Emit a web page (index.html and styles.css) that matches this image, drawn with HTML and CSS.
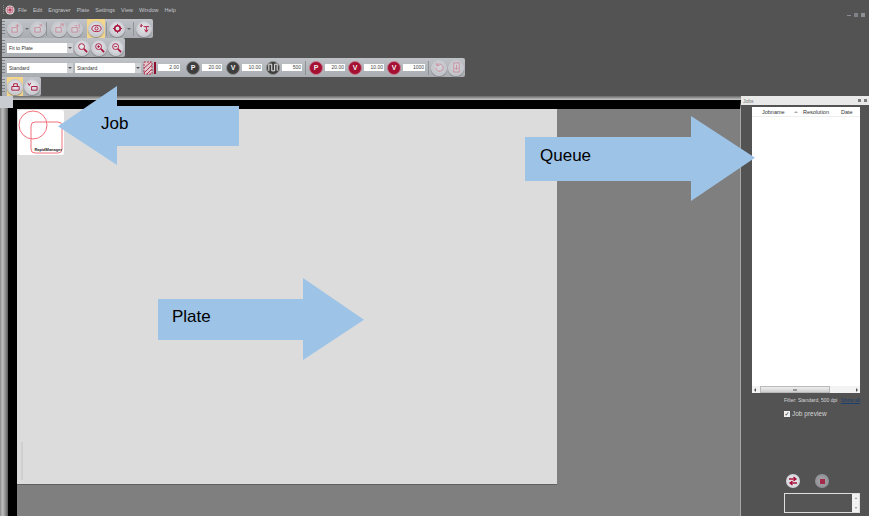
FILE: index.html
```html
<!DOCTYPE html>
<html lang="en">
  <head>
    <meta charset="UTF-8" />
    <title>Plate manager</title>
    <link rel="stylesheet" href="styles.css">
  </head>
  <body>
    <div class="app">
      <div class="menubar">
        <div class="menu-grip"></div>
        <svg class="app-logo" width="10" height="10" viewBox="0 0 10 10">
          <circle cx="5" cy="5" r="4.5" fill="#e8e3e5"></circle>
          <circle cx="5" cy="5" r="3.4" fill="#b4405c"></circle>
          <path d="M3 3h4v4H3z" fill="none" stroke="#eee" stroke-width="0.8"></path>
        </svg>
        <span class="menu-item">File</span>
        <span class="menu-item">Edit</span>
        <span class="menu-item">Engraver</span>
        <span class="menu-item">Plate</span>
        <span class="menu-item">Settings</span>
        <span class="menu-item">View</span>
        <span class="menu-item">Window</span>
        <span class="menu-item">Help</span>
        <div class="win-controls">
          <i class="win-min"></i>
          <i class="win-max"></i>
          <i class="win-close"></i>
        </div>
      </div>

      <div class="toolbar tb-main">
        <div class="grip"></div>
        <button class="tool dim">
          <svg viewBox="0 0 12 12"><path d="M2 5h6v5H2z M8 1v4 M6 3h4" class="ic-dim"></path></svg>
        </button>
        <i class="drop"></i>
        <button class="tool dim">
          <svg viewBox="0 0 12 12"><path d="M2 5h6v5H2z M7 1l3 3 M10 1L7 4" class="ic-dim"></path></svg>
        </button>
        <i class="sep sep-a"></i>
        <button class="tool dim">
          <svg viewBox="0 0 12 12"><path d="M2 5h6v5H2z M6 4l4-3 M7 1h3v3" class="ic-dim"></path></svg>
        </button>
        <button class="tool dim">
          <svg viewBox="0 0 12 12"><path d="M2 5h6v5H2z M5 3h3 M10 1v5 M10 8v1" class="ic-dim"></path></svg>
        </button>
        <div class="tool-on">
          <button class="tool">
            <svg viewBox="0 0 12 12"><ellipse cx="6" cy="6" rx="5" ry="3.4" class="ic"></ellipse><circle cx="6" cy="6" r="1.7" class="ic"></circle></svg>
          </button>
        </div>
        <i class="sep sep-b"></i>
        <button class="tool">
          <svg viewBox="0 0 12 12"><circle cx="6" cy="6" r="3" class="ic ic-thick"></circle><path d="M6 1v2 M6 9v2 M1 6h2 M9 6h2" class="ic"></path></svg>
        </button>
        <i class="drop"></i>
        <i class="sep"></i>
        <button class="tool">
          <svg viewBox="0 0 12 12"><path d="M1 3l1.500 1L4 2.500 M2.500 1v3 M5 4h6 M8 4v5 M6 7l2 3 2-3" class="ic"></path></svg>
        </button>
      </div>

      <div class="toolbar tb-zoom">
        <div class="grip"></div>
        <div class="combo combo-wide">
          <span>Fit to Plate</span><i class="combo-arrow"></i>
        </div>
        <button class="tool">
          <svg viewBox="0 0 12 12"><circle cx="5" cy="5" r="3.2" class="ic"></circle><path d="M7.500 7.500L11 11" class="ic ic-thick"></path></svg>
        </button>
        <button class="tool">
          <svg viewBox="0 0 12 12"><circle cx="5" cy="5" r="3.2" class="ic"></circle><path d="M7.500 7.500L11 11" class="ic ic-thick"></path><path d="M3.500 5h3 M5 3.500v3" class="ic"></path></svg>
        </button>
        <button class="tool">
          <svg viewBox="0 0 12 12"><circle cx="5" cy="5" r="3.2" class="ic"></circle><path d="M7.500 7.500L11 11" class="ic ic-thick"></path><path d="M3.500 5h3" class="ic"></path></svg>
        </button>
      </div>

      <div class="toolbar tb-params">
        <div class="grip"></div>
        <div class="combo combo-wide"><span>Standard</span><i class="combo-arrow"></i></div>
        <div class="combo combo-wide combo-next"><span>Standard</span><i class="combo-arrow"></i></div>
        <svg class="hatch" width="15" height="16" viewBox="0 0 15 16">
          <path d="M1 2h8v12H1z" fill="#e2c9d0" stroke="#b03a55" stroke-width="1" stroke-dasharray="2 1"></path>
          <path d="M1 8L8 2 M1 13L9 5 M4 14l5-5" stroke="#b03a55" stroke-width="1"></path>
          <path d="M12 2v12" stroke="#8f1230" stroke-width="2"></path>
        </svg>
        <span class="num num-wide">2.00</span>
        <span class="badge badge-dark badge-first">P</span>
        <span class="num">20.00</span>
        <span class="badge badge-dark">V</span>
        <span class="num">10.00</span>
        <span class="badge badge-dark">
          <svg width="10" height="9" viewBox="0 0 12 10"><path d="M1 9V1h3.500v8H8V1h3v8" fill="none" stroke="#eee" stroke-width="1.200"></path></svg>
        </span>
        <span class="num">500</span>
        <i class="sep sep-c"></i>
        <span class="badge badge-red">P</span>
        <span class="num">20.00</span>
        <span class="badge badge-red">V</span>
        <span class="num">10.00</span>
        <span class="badge badge-red">V</span>
        <span class="num num-wide">1000</span>
        <i class="sep sep-d"></i>
        <button class="tool dim">
          <svg viewBox="0 0 12 12"><path d="M3 3.500A4 4 0 1 1 2 6.500 M3 1v3h3" class="ic-dim"></path></svg>
        </button>
        <button class="tool dim tool-last">
          <svg viewBox="0 0 12 12"><path d="M3 1h6v10H3z M6 3v5 M4 6l2 2 2-2" class="ic-dim"></path></svg>
        </button>
      </div>

      <div class="toolbar tb-mode">
        <div class="grip"></div>
        <div class="tool-on">
          <button class="tool">
            <svg viewBox="0 0 12 12"><path d="M2 6h8v4H2z M4 6V3h4v3" class="ic"></path></svg>
          </button>
        </div>
        <button class="tool">
          <svg viewBox="0 0 12 12"><path d="M1 2l1.500 3L4 2 M5 6h6v4H5z" class="ic"></path></svg>
        </button>
      </div>

      <div class="workspace">
        <div class="view">
          <div class="view-corner"></div>
          <div class="view-top"></div>
          <div class="view-body">
            <div class="view-edge"></div>
            <div class="view-black"></div>
            <div class="canvas">
              <div class="plate">
                <div class="job">
                  <svg width="45" height="44" viewBox="0 0 45 44">
                    <circle cx="15" cy="15" r="14" fill="none" stroke="#f0727c" stroke-width="1"></circle>
                    <rect x="13" y="12" width="31" height="31" rx="4" fill="none" stroke="#f0727c" stroke-width="1"></rect>
                  </svg>
                  <span class="job-name">RapidManager</span>
                </div>
                <div class="plate-mark"></div>
              </div>
            </div>
          </div>
        </div>

        <aside class="jobs">
          <div class="jobs-head">
            <span>Jobs</span>
            <span class="jobs-btns"><i></i><i></i></span>
          </div>
          <div class="jobs-table">
            <div class="jobs-cols">
              <span class="col-name">Jobname</span>
              <span class="col-sort"></span>
              <span class="col-res">Resolution</span>
              <span class="col-date">Date</span>
            </div>
            <div class="jobs-rows"></div>
            <div class="hscroll">
              <i class="arrow-l"></i>
              <div class="hscroll-thumb"><b></b></div>
              <i class="arrow-r"></i>
            </div>
          </div>
          <div class="jobs-filter">
            <span>Filter: Standard, 500 dpi</span>
            <a>Show all</a>
          </div>
          <label class="jobs-preview">
            <i class="check">✓</i>
            <span>Job preview</span>
          </label>
          <div class="jobs-actions">
            <span class="round-btn">
              <svg width="10" height="10" viewBox="0 0 10 10">
                <path d="M1 3h6 M5.500 1L8 3 5.500 5 M9 7H3 M4.500 5L2 7l2.500 2" fill="none" stroke="#a8103a" stroke-width="1.300"></path>
              </svg>
            </span>
            <span class="round-btn round-stop"><i></i></span>
          </div>
          <div class="jobs-log">
            <div class="log-scroll"><i class="up"></i><i class="down"></i></div>
          </div>
        </aside>
      </div>

      <div class="callout callout-job"><span>Job</span></div>
      <div class="callout callout-queue"><span>Queue</span></div>
      <div class="callout callout-plate"><span>Plate</span></div>
    </div>
  </body>
</html>
```

FILE: styles.css
```css
* {
  box-sizing: border-box;
  margin: 0;
  padding: 0;
}

html,
body {
  width: 869px;
  height: 516px;
  overflow: hidden;
}

body {
  background: #535353;
  font-family: "Liberation Sans", Arial, sans-serif;
}

.app {
  position: relative;
  display: flex;
  flex-direction: column;
  width: 869px;
  height: 516px;
  background: #535353;
}

/* menu */
.menubar {
  display: flex;
  align-items: center;
  height: 19px;
  padding: 1px 0 0 3px;
  font-size: 5.500px;
  color: #c4c7cb;
}

.menu-grip {
  flex: none;
  width: 1px;
  height: 10px;
  margin-right: 1px;
  background: repeating-linear-gradient(#8a8a8a 0 1px, transparent 1px 2px);
}

.app-logo {
  flex: none;
  margin-right: 3px;
}

.menu-item {
  margin-right: 6px;
}

.win-controls {
  display: flex;
  align-items: center;
  gap: 3px;
  margin-left: auto;
  margin-right: 4px;
  padding-top: 10px;
}

.win-controls i {
  display: block;
}

.win-min {
  width: 4px;
  height: 1px;
  background: #8a8d92;
}

.win-max {
  width: 4px;
  height: 4px;
  background: #7f8388;
}

.win-close {
  width: 4px;
  height: 4px;
  background: #8c9096;
}

/* toolbars */
.toolbar {
  display: flex;
  align-items: center;
  margin-left: 2px;
  height: 19px;
  border-radius: 0 2px 2px 0;
  background: linear-gradient(#bfc2c7, #a9acb1);
}

.tb-main {
  width: 151px;
}

.tb-zoom {
  width: 123px;
}

.tb-params {
  width: 463px;
  margin-top: 1px;
}

.tb-mode {
  width: 39px;
}

.grip {
  flex: none;
  width: 3px;
  height: 15px;
  margin-right: 2px;
  background: repeating-linear-gradient(#7d8084 0 1px, transparent 1px 3px);
}

.tool {
  display: flex;
  flex: none;
  align-items: center;
  justify-content: center;
  width: 16px;
  height: 16px;
  border: 1px solid #c8cacf;
  border-radius: 50%;
  background: radial-gradient(circle at 50% 40%, #e9eaee, #bdc0c6);
  box-shadow: 0 1px 1px #83868b;
}

.tool svg {
  display: block;
  width: 11px;
  height: 11px;
}

.ic {
  fill: none;
  stroke: #a8103a;
  stroke-width: 1;
}

.ic-thick {
  stroke-width: 1.800;
}

.ic-dim {
  fill: none;
  stroke: #c98d9c;
  stroke-width: 1;
}

.tool.dim {
  background: radial-gradient(circle at 50% 40%, #d6d7db, #b9bbc1);
}

.tool-on {
  display: flex;
  flex: none;
  align-items: center;
  justify-content: center;
  width: 18px;
  height: 19px;
  margin: 0 0 0 4px;
  background: #f3d68c;
}

.tb-mode .tool-on {
  width: 16px;
  margin: 0 1px 0 0;
}

.drop {
  flex: none;
  width: 0;
  height: 0;
  margin: 0 1px 0 2px;
  border-left: 2px solid transparent;
  border-right: 2px solid transparent;
  border-top: 2px solid #686b70;
}

.sep {
  flex: none;
  width: 1px;
  height: 14px;
  margin: 0 2px 0 1px;
  background: #8f9297;
}

.sep-a {
  margin: 0 4px 0 0;
}

.sep-b {
  margin: 0 2px 0 1px;
}

.sep-c {
  margin: 0 0 0 3px;
}

.sep-d {
  margin: 0 2px 0 3px;
}

.tool-last {
  margin-left: 1px;
}

.tb-zoom .tool {
  margin-left: 1px;
}

/* combos and number fields */
.combo {
  display: flex;
  flex: none;
  align-items: center;
  height: 10px;
  background: #fff;
  font-size: 5px;
  color: #333;
}

.combo span {
  flex: 1;
  padding-left: 2px;
}

.combo-arrow {
  display: flex;
  align-items: center;
  justify-content: center;
  width: 6px;
  height: 100%;
  background: #cfd1d5;
}

.combo-arrow::after {
  content: "";
  border-left: 2px solid transparent;
  border-right: 2px solid transparent;
  border-top: 2px solid #555;
}

.combo-wide {
  width: 66px;
}

.combo-next {
  margin: 0 2px;
}

.hatch {
  flex: none;
}

.num {
  flex: none;
  width: 20px;
  height: 7px;
  padding-right: 1px;
  background: #fff;
  font-size: 5px;
  line-height: 7px;
  text-align: right;
  color: #444;
}

.num-wide {
  width: 22px;
}

.badge {
  display: flex;
  flex: none;
  align-items: center;
  justify-content: center;
  width: 14px;
  height: 14px;
  margin: 0 2px 0 4px;
  border-radius: 50%;
  font-size: 7px;
  font-weight: bold;
  color: #f2f2f2;
}

.badge-first {
  margin-left: 6px;
}

.badge-dark {
  border: 1px solid #8a8a8a;
  background: #3d3d3d;
}

.badge-red {
  margin-left: 3px;
  border: 1px solid #c3768a;
  background: #a40f32;
}

/* main area */
.workspace {
  display: flex;
  flex: 1;
  min-height: 0;
}

.view {
  position: relative;
  display: flex;
  flex-direction: column;
  width: 741px;
}

.view-corner {
  position: absolute;
  left: 0;
  top: 0;
  width: 13px;
  height: 12px;
  background: #c9ccd0;
}

.view-top {
  flex: none;
  height: 4px;
  background: linear-gradient(#6a6a6a, #c9c9c9);
}

.view-body {
  display: flex;
  flex: 1;
  min-height: 0;
}

.view-edge {
  flex: none;
  width: 8px;
  background: linear-gradient(90deg, #8a8a8a, #bdbdbd 30%, #9a9a9a 60%, #5a5a5a);
}

.view-black {
  flex: none;
  width: 9px;
  background: #000;
}

.canvas {
  flex: 1;
  border-top: 9px solid #000;
  border-right: 1px solid #a8a8a8;
  background: #7f7f7f;
}

.plate {
  position: relative;
  width: 540px;
  height: 376px;
  padding: 1px;
  border-bottom: 1px solid #5f5f5f;
  background: #dcdcdc;
}

.job {
  position: relative;
  width: 46px;
  height: 45px;
  border-radius: 2px;
  background: #fff;
}

.job svg {
  display: block;
}

.job-name {
  position: absolute;
  right: 2px;
  bottom: 3px;
  font-size: 4px;
  font-weight: bold;
  color: #222;
}

.plate-mark {
  position: absolute;
  left: 4px;
  top: 333px;
  width: 2px;
  height: 38px;
  background: #cfcfcf;
}

/* jobs panel */
.jobs {
  display: flex;
  flex-direction: column;
  width: 128px;
  background: #535353;
}

.jobs-head {
  display: flex;
  flex: none;
  align-items: center;
  justify-content: space-between;
  height: 9px;
  padding: 0 2px;
  background: #e9e9e9;
  font-size: 5px;
  color: #777;
}

.jobs-btns {
  display: flex;
  gap: 3px;
}

.jobs-btns i {
  display: block;
  width: 3px;
  height: 3px;
  background: #7b7b7b;
}

.jobs-table {
  display: flex;
  flex: none;
  flex-direction: column;
  width: 108px;
  height: 286px;
  margin: 2px 0 0 11px;
  background: #fff;
}

.jobs-cols {
  display: flex;
  flex: none;
  align-items: center;
  height: 10px;
  border-bottom: 1px solid #eee;
  font-size: 5.500px;
  color: #333;
}

.col-name {
  flex: none;
  width: 33px;
  padding-left: 10px;
}

.col-sort {
  width: 0;
  height: 0;
  margin: 0 5px 0 9px;
  border-left: 2px solid transparent;
  border-right: 2px solid transparent;
  border-bottom: 2px solid #aaa;
}

.col-res {
  flex: none;
  width: 38px;
}

.col-date {
  flex: none;
}

.jobs-rows {
  flex: 1;
}

.hscroll {
  display: flex;
  flex: none;
  align-items: center;
  height: 7px;
  background: #f3f3f3;
}

.hscroll i {
  flex: none;
  width: 0;
  height: 0;
  border-top: 2px solid transparent;
  border-bottom: 2px solid transparent;
}

.hscroll .arrow-l {
  margin: 0 4px 0 2px;
  border-right: 2px solid #555;
}

.hscroll .arrow-r {
  margin-left: 26px;
  border-left: 2px solid #555;
}

.hscroll-thumb {
  display: flex;
  align-items: center;
  justify-content: center;
  width: 70px;
  height: 7px;
  border: 1px solid #b9b9b9;
  background: linear-gradient(#eee, #cfcfcf);
}

.hscroll-thumb b {
  width: 4px;
  height: 2px;
  background: #999;
}

.jobs-filter {
  display: flex;
  justify-content: space-between;
  width: 76px;
  margin: 4px 0 0 43px;
  font-size: 5px;
  white-space: nowrap;
  color: #d8d8d8;
}

.jobs-filter a {
  color: #1c3f6e;
  text-decoration: underline;
}

.jobs-preview {
  display: flex;
  align-items: center;
  gap: 2px;
  margin: 7px 0 0 43px;
  font-size: 6.500px;
  color: #d4d4d4;
}

.check {
  display: flex;
  flex: none;
  align-items: center;
  justify-content: center;
  width: 6px;
  height: 6px;
  background: #f0f0f0;
  font: normal 6px "DejaVu Sans", sans-serif;
  color: #222;
}

.jobs-actions {
  display: flex;
  gap: 15px;
  margin: auto 0 5px 45px;
}

.round-btn {
  display: flex;
  align-items: center;
  justify-content: center;
  width: 14px;
  height: 14px;
  border-radius: 50%;
  background: radial-gradient(circle, #f0f0f3, #c6c8ce);
}

.round-stop {
  background: radial-gradient(circle, #a9a9ae, #85868b);
}

.round-stop i {
  width: 5px;
  height: 5px;
  background: #a32a48;
}

.jobs-log {
  display: flex;
  flex: none;
  justify-content: flex-end;
  width: 76px;
  height: 20px;
  margin: 0 0 3px 43px;
  border: 1px solid #dedede;
  background: #555;
}

.log-scroll {
  display: flex;
  flex-direction: column;
  align-items: center;
  justify-content: space-between;
  width: 7px;
  padding: 3px 0;
  background: #f2f2f2;
}

.log-scroll i {
  width: 0;
  height: 0;
  border-left: 1.500px solid transparent;
  border-right: 1.500px solid transparent;
}

.log-scroll .up {
  border-bottom: 2px solid #888;
}

.log-scroll .down {
  border-top: 2px solid #888;
}

/* arrows drawn over the screenshot */
.callout {
  position: absolute;
  display: flex;
  align-items: center;
  background: #9dc3e6;
  font-size: 17px;
  color: #000;
}

.callout-job {
  left: 58px;
  top: 86px;
  width: 181px;
  height: 79px;
  padding: 0 0 3px 43px;
  clip-path: polygon(0 51%, 59px 0, 59px 20px, 100% 20px, 100% 60px, 59px 60px, 59px 100%);
}

.callout-queue {
  left: 525px;
  top: 116px;
  width: 230px;
  height: 85px;
  padding: 0 0 5px 15px;
  clip-path: polygon(0 21px, 166px 21px, 166px 0, 100% 49%, 166px 100%, 166px 65px, 0 65px);
}

.callout-plate {
  left: 158px;
  top: 278px;
  width: 206px;
  height: 82px;
  padding: 0 0 5px 14px;
  clip-path: polygon(0 21px, 145px 21px, 145px 0, 100% 51%, 145px 100%, 145px 62px, 0 62px);
}
```
